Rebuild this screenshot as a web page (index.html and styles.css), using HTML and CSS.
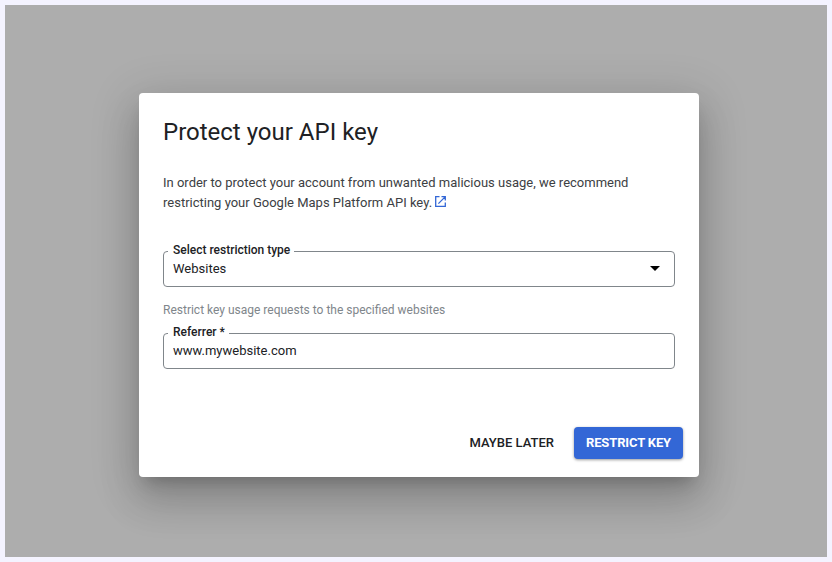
FILE: index.html
```html
<!DOCTYPE html>
<html lang="en">
<head>
  <meta charset="UTF-8">
  <title>Protect your API key</title>
  <meta name="viewport" content="width=device-width, initial-scale=1.0">
  <link rel="stylesheet" href="styles.css">
</head>
<body>
  <div class="backdrop">
    <div class="dialog" role="dialog" aria-labelledby="dialog-title">
      <h2 id="dialog-title">Protect your API key</h2>
      <p class="intro">
        In order to protect your account from unwanted malicious usage, we recommend
        <br>restricting your Google Maps Platform API key.
        <a href="#" class="external" aria-label="Learn more"><svg viewBox="0 0 11 11" width="11" height="11">
          <path d="M4.5 .7H.7v9.6h9.6V6.5M6.5 .7h3.8v3.8M10.1 .9L3.4 7.6" />
        </svg></a>
      </p>

      <!-- restriction type -->
      <div class="field">
        <label for="restriction">Select restriction type</label>
        <div class="control" id="restriction">
          <span>Websites</span>
          <svg class="arrow" viewBox="0 0 10 5" width="10" height="5"><path d="M0 0h10L5 5z" /></svg>
        </div>
      </div>
      <p class="hint">Restrict key usage requests to the specified websites</p>

      <div class="field">
        <label for="referrer">Referrer *</label>
        <input type="text" id="referrer" class="control" name="referrer" value="www.mywebsite.com">
      </div>

      <div class="actions">
        <button type="button" class="btn">MAYBE LATER</button>
        <button type="button" class="btn btn-primary">RESTRICT KEY</button>
      </div>
    </div>
  </div>
</body>
</html>
```
FILE: styles.css
```css
* {
  box-sizing: border-box;
}
body {
  margin: 0;
  padding: 5px;
  height: 562px;
  background-color: #f4f3ff;
  font-family: Roboto, Arial, sans-serif;
  color: #202124;
}
.backdrop {
  height: 552px;
  padding: 87.5px 128px 0 134px;
  background-color: #adadad;
  overflow: hidden;
}
.dialog {
  width: 560px;
  height: 384px;
  padding: 24px;
  background: white;
  border-radius: 4px;
  box-shadow: 0 11px 15px -7px rgba(0, 0, 0, 0.2),
    0 24px 38px 3px rgba(0, 0, 0, 0.14),
    0 9px 46px 8px rgba(0, 0, 0, 0.12);
}
.dialog h2 {
  margin: 0;
  font-size: 24px;
  font-weight: 400;
  line-height: 31px;
}
.intro {
  margin: 25px 0 0;
  font-size: 13px;
  line-height: 20px;
  color: #3c4043;
}
.external svg {
  fill: none;
  stroke: #3367d6;
  stroke-width: 1.3;
}
.field {
  position: relative;
}
.intro + .field {
  margin-top: 38px;
}
.field label {
  position: absolute;
  top: -9px;
  left: 5px;
  padding: 0 4px 0 5px;
  background: white;
  font-size: 12px;
  font-weight: 500;
  line-height: 16px;
}
.control {
  display: flex;
  align-items: center;
  justify-content: space-between;
  width: 512px;
  height: 36px;
  padding: 0 14px 1px 9px;
  border: 1px solid #80868b;
  border-radius: 4px;
  background: white;
  font-family: inherit;
  font-size: 13px;
  color: #202124;
}
.arrow {
  fill: black;
}
.hint {
  margin: 15px 0;
  font-size: 12px;
  line-height: 16px;
  color: #80868b;
}
.actions {
  display: flex;
  justify-content: flex-end;
  gap: 8px;
  margin: 58px -8px 0 0;
}
.btn {
  height: 32px;
  padding: 0 12px;
  border: none;
  border-radius: 4px;
  background: none;
  font-family: inherit;
  font-size: 13px;
  font-weight: 500;
  line-height: 30px;
  color: #202124;
}
.btn-primary {
  width: 109px;
  background-color: #3367d6;
  color: white;
  font-weight: 700;
  letter-spacing: -0.15px;
  box-shadow: 0 1px 3px rgba(0, 0, 0, 0.4);
}
```
